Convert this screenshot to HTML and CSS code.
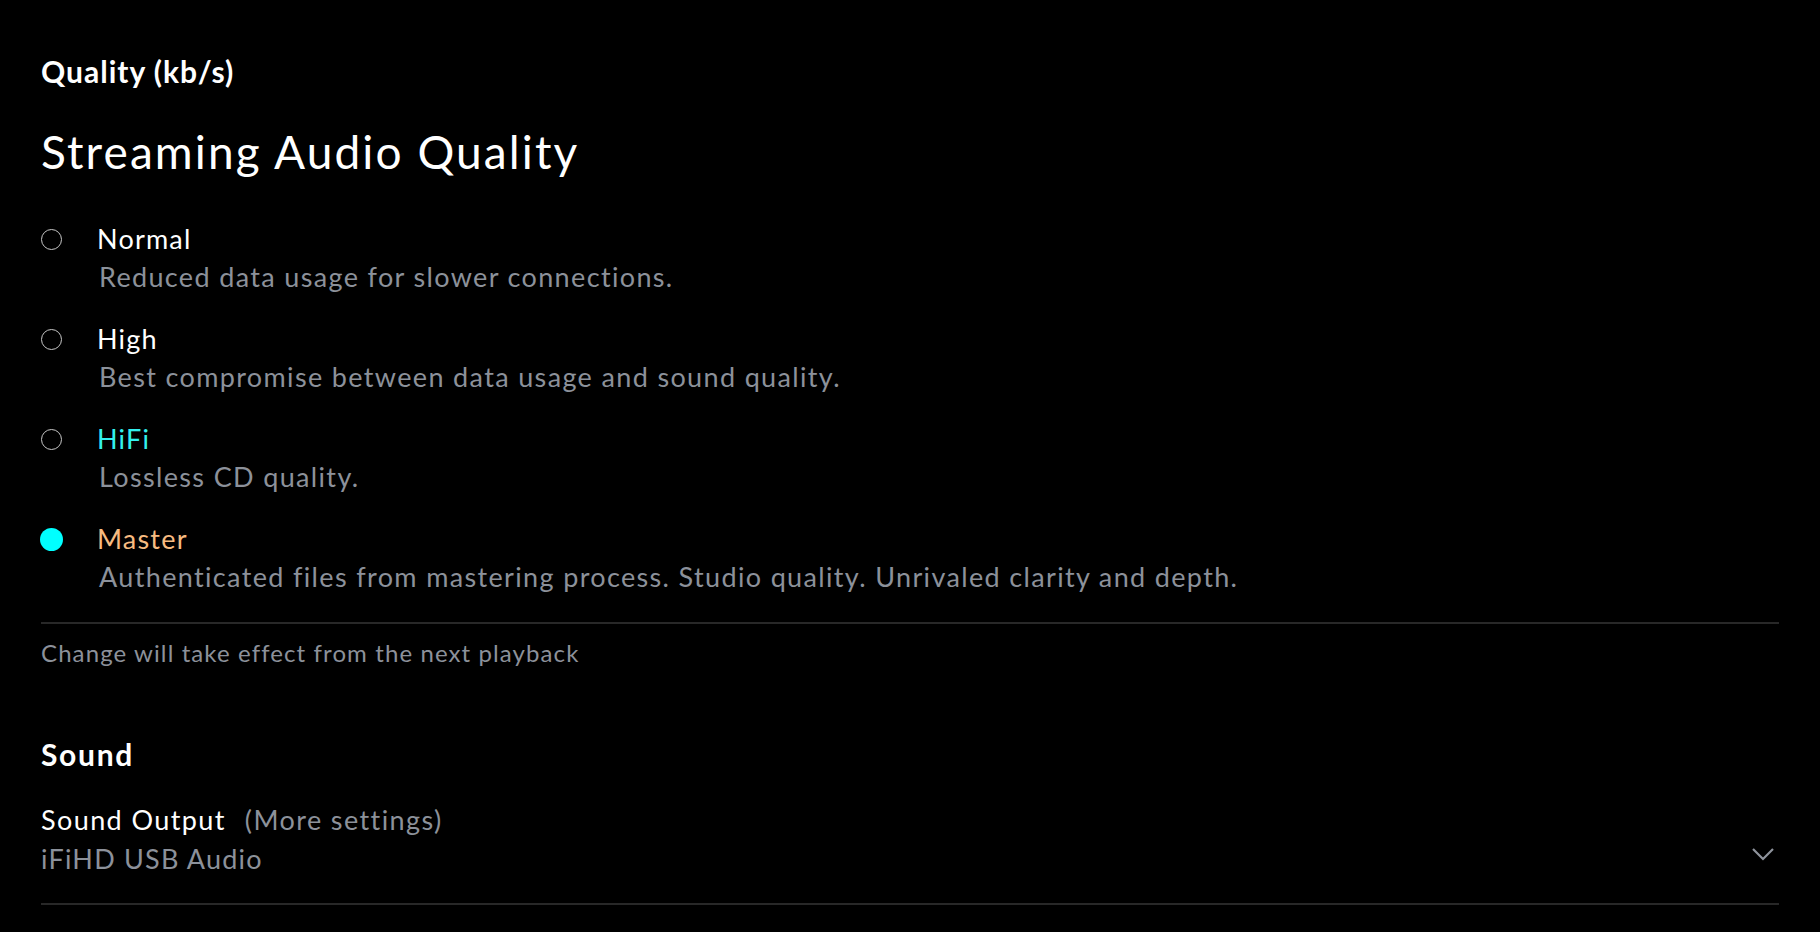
FILE: index.html
```html
<!DOCTYPE html>
<html lang="en">
<head>
    <meta charset="UTF-8">
    <meta name="viewport" content="width=device-width, initial-scale=1.0">
    <title>Settings - Streaming</title>
    <link rel="stylesheet" href="styles.css">
</head>
<body>

<div class="settings">
    <h3 class="group-title">Quality (kb/s)</h3>
    <h2 class="page-title">Streaming Audio Quality</h2>

    <div class="options">
        <div class="option">
            <span class="radio"></span>
            <span class="option-name">Normal</span>
            <span class="option-desc">Reduced data usage for slower connections.</span>
        </div>
        <div class="option">
            <span class="radio"></span>
            <span class="option-name">High</span>
            <span class="option-desc">Best compromise between data usage and sound quality.</span>
        </div>
        <div class="option">
            <span class="radio"></span>
            <span class="option-name hifi">HiFi</span>
            <span class="option-desc">Lossless CD quality.</span>
        </div>
        <div class="option">
            <span class="radio checked"></span>
            <span class="option-name master">Master</span>
            <span class="option-desc">Authenticated files from mastering process. Studio quality. Unrivaled clarity and depth.</span>
        </div>
    </div>

    <div class="divider"></div>
    <p class="note">Change will take effect from the next playback</p>

    <h3 class="group-title sound-title">Sound</h3>

    <div class="output">
        <div class="output-head">
            <span class="output-name">Sound Output</span>
            <span class="output-more">(More settings)</span>
        </div>
        <div class="output-value">
            <span>iFiHD USB Audio</span>
            <svg class="chevron" width="24" height="15" viewBox="0 0 24 15">
                <path d="M2 2 L12 12 L22 2" fill="none" stroke="#8e939c" stroke-width="2.2"/>
            </svg>
        </div>
    </div>
    <div class="divider"></div>
</div>

</body>
</html>
```

FILE: styles.css
```css
body {
    margin: 0;
    background: #000;
    color: #fff;
    font-family: Lato, "Noto Sans", sans-serif;
}
.settings {
    padding: 53px 41px 0 41px;
}
.group-title {
    margin: 0;
    font-size: 30px;
    line-height: 36px;
    font-weight: 700;
    letter-spacing: 1px;
}
.page-title {
    margin: 36px 0 0 0;
    font-size: 46px;
    line-height: 54px;
    font-weight: 400;
    letter-spacing: 2.1px;
}
.options {
    margin-top: 41px;
    display: flex;
    flex-direction: column;
    gap: 24px;
}
.option {
    display: grid;
    grid-template-columns: 56px 1fr;
}
.radio {
    grid-row: 1;
    align-self: center;
    width: 19px;
    height: 19px;
    border: 1.5px solid #c8c8c8;
    border-radius: 50%;
    margin-left: 0;
}
.radio.checked {
    width: 23px;
    height: 23px;
    border: none;
    background: #00ffff;
    margin-left: -1px;
}
.option-name {
    grid-column: 2;
    font-size: 27px;
    line-height: 38px;
    letter-spacing: 1.2px;
}
.option-name.hifi {
    color: #33f0ee;
}
.option-name.master {
    color: #f7bb80;
}
.option-desc {
    grid-column: 2;
    font-size: 27px;
    line-height: 38px;
    letter-spacing: 1.35px;
    color: #8c919a;
    padding-left: 2px;
}
.divider {
    height: 2px;
    background: #282828;
}
.options + .divider {
    margin-top: 26px;
}
.note {
    margin: 14px 0 0 0;
    font-size: 24px;
    line-height: 30px;
    letter-spacing: 1.1px;
    color: #8c919a;
}
.sound-title {
    margin-top: 68px;
    letter-spacing: 1.7px;
}
.output {
    margin-top: 30px;
    padding-bottom: 26px;
}
.output-head {
    display: flex;
    align-items: baseline;
    gap: 19px;
    font-size: 27px;
    line-height: 36px;
    letter-spacing: 1.4px;
}
.output-more {
    color: #8c919a;
}
.output-value {
    margin-top: 3px;
    display: flex;
    justify-content: space-between;
    align-items: center;
    font-size: 27px;
    line-height: 36px;
    letter-spacing: 1.2px;
    color: #8c919a;
}
.chevron {
    margin-right: 4px;
    margin-bottom: 10px;
}
```
